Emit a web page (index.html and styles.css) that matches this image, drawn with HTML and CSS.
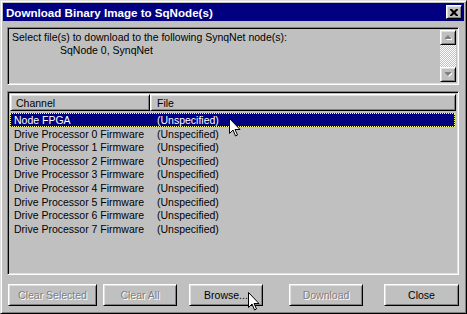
FILE: index.html
```html
<!DOCTYPE html>
<html lang="en">
  <head>
    <meta charset="UTF-8" />
    <title>Download Binary Image to SqNode(s)</title>
    <link rel="stylesheet" href="styles.css">
  </head>
  <body>
    <div class="window">
      <div class="titlebar">
        <span class="title">Download Binary Image to SqNode(s)</span>
        <div class="close-x">
          <svg width="8" height="7" viewBox="0 0 8 7">
            <path d="M0 0h2l2 2 2-2h2v1l-2.5 2.5 2.5 2.5v1h-2l-2-2-2 2h-2v-1l2.5-2.5-2.5-2.5z" fill="#000"/>
          </svg>
        </div>
      </div>

      <div class="content">
        <!-- 提示框 -->
        <div class="edit sunken">
          <div class="edit-text">
            <p>Select file(s) to download to the following SynqNet node(s):</p>
            <p class="indent">SqNode 0, SynqNet</p>
          </div>
          <div class="vscroll">
            <div class="sbtn raised">
              <svg width="7" height="5" viewBox="0 0 7 5"><path d="M4 1l3 3v1h-6z" fill="#fff"/><path d="M3 0l3 3v1h-6v-1z" fill="#808080"/></svg>
            </div>
            <div class="track"></div>
            <div class="sbtn raised">
              <svg width="7" height="5" viewBox="0 0 7 5"><path d="M1 1h6v1l-3 3z" fill="#fff"/><path d="M0 0h6v1l-3 3-3-3z" fill="#808080"/></svg>
            </div>
          </div>
        </div>

        <!-- 列表 -->
        <div class="list sunken">
          <div class="head">
            <div class="hcell raised col1">Channel</div>
            <div class="hcell raised col2">File</div>
          </div>
          <div class="rows">
            <div class="row selected"><span class="col1">Node FPGA</span><span class="col2">(Unspecified)</span></div>
            <div class="row"><span class="col1">Drive Processor 0 Firmware</span><span class="col2">(Unspecified)</span></div>
            <div class="row"><span class="col1">Drive Processor 1 Firmware</span><span class="col2">(Unspecified)</span></div>
            <div class="row"><span class="col1">Drive Processor 2 Firmware</span><span class="col2">(Unspecified)</span></div>
            <div class="row"><span class="col1">Drive Processor 3 Firmware</span><span class="col2">(Unspecified)</span></div>
            <div class="row"><span class="col1">Drive Processor 4 Firmware</span><span class="col2">(Unspecified)</span></div>
            <div class="row"><span class="col1">Drive Processor 5 Firmware</span><span class="col2">(Unspecified)</span></div>
            <div class="row"><span class="col1">Drive Processor 6 Firmware</span><span class="col2">(Unspecified)</span></div>
            <div class="row"><span class="col1">Drive Processor 7 Firmware</span><span class="col2">(Unspecified)</span></div>
          </div>
        </div>

        <!-- 按钮 -->
        <div class="buttons">
          <button class="btn raised disabled b-clear-sel">Clear Selected</button>
          <button class="btn raised disabled b-clear-all">Clear All</button>
          <button class="btn raised b-browse">Browse...</button>
          <button class="btn raised disabled b-download">Download</button>
          <button class="btn raised b-close">Close</button>
        </div>
      </div>

      <!-- 鼠标指针 -->
      <svg class="cursor cursor-1" width="12" height="19" viewBox="0 0 12 19">
        <path d="M0.5 0.5v15l3.5-3.5 2.5 6 2-1-2.5-5.5h5z" fill="#fff" stroke="#000" stroke-width="1"/>
      </svg>
      <svg class="cursor cursor-2" width="12" height="19" viewBox="0 0 12 19">
        <path d="M0.5 0.5v15l3.5-3.5 2.5 6 2-1-2.5-5.5h5z" fill="#fff" stroke="#000" stroke-width="1"/>
      </svg>
    </div>
  </body>
</html>
```

FILE: styles.css
```css
* {
  margin: 0;
  padding: 0;
  box-sizing: border-box;
}

body {
  background-color: #c0c0c0;
  font-family: "Liberation Sans", Arial, sans-serif;
  font-size: 10.5px;
  color: #000;
}

.window {
  position: relative;
  width: 467px;
  height: 314px;
  padding: 2px;
  border: 1px solid;
  border-color: #dfdfdf #000 #000 #dfdfdf;
  box-shadow: inset 1px 1px #fff, inset -1px -1px #808080;
  background-color: #c0c0c0;
  display: flex;
  flex-direction: column;
}

.raised {
  border: 1px solid;
  border-color: #fff #000 #000 #fff;
  box-shadow: inset 1px 1px #dfdfdf, inset -1px -1px #808080;
  background-color: #c0c0c0;
}

.sunken {
  border: 1px solid;
  border-color: #808080 #fff #fff #808080;
  box-shadow: inset 1px 1px #000, inset -1px -1px #dfdfdf;
  background-color: #c0c0c0;
}

.titlebar {
  height: 18px;
  background-color: #000080;
  display: flex;
  align-items: center;
  justify-content: space-between;
  padding: 0 2px 0 3px;
}

.title {
  color: #fff;
  font-weight: bold;
  font-size: 11.6px;
}

.close-x {
  width: 16px;
  height: 14px;
  border: 1px solid;
  border-color: #fff #000 #000 #fff;
  box-shadow: inset 1px 1px #dfdfdf, inset -1px -1px #808080;
  background-color: #c0c0c0;
  display: flex;
  align-items: center;
  justify-content: center;
}

.content {
  flex: 1;
  display: flex;
  flex-direction: column;
  padding: 6px 5px 0 4px;
}

.edit {
  height: 58px;
  display: flex;
  padding: 2px;
}

.edit-text {
  flex: 1;
  padding: 1px 0 0 2px;
  line-height: 13px;
}

.edit-text .indent {
  padding-left: 48px;
}

.vscroll {
  width: 16px;
  display: flex;
  flex-direction: column;
}

.sbtn {
  height: 15px;
  display: flex;
  align-items: center;
  justify-content: center;
}

.track {
  flex: 1;
  background-image: repeating-conic-gradient(#fff 0 25%, #c0c0c0 0 50%);
  background-size: 2px 2px;
}

.list {
  height: 184px;
  margin-top: 6px;
  padding: 2px;
}

.head {
  display: flex;
  height: 17px;
}

.hcell {
  display: flex;
  align-items: center;
  padding-left: 5px;
}

.head .col1 {
  width: 140px;
}

.head .col2 {
  flex: 1;
  padding-left: 6px;
}

.rows {
  padding-top: 2px;
}

.row {
  display: flex;
  height: 13.6px;
  line-height: 12px;
  border: 1px solid transparent;
  margin-right: 1px;
}

.row .col1 {
  width: 146px;
  padding-left: 3px;
}

.row.selected {
  background-color: #000080;
  color: #fff;
  border: 1px dotted #ffff80;
}

.buttons {
  display: flex;
  margin-top: 9px;
}

.btn {
  height: 22px;
  font-family: "Liberation Sans", Arial, sans-serif;
  font-size: 10.5px;
  color: #000;
}

.btn.disabled {
  color: #808080;
  text-shadow: 1px 1px #fff;
}

.b-clear-sel {
  width: 89px;
  margin-left: 1px;
}

.b-clear-all {
  width: 74px;
  margin-left: 6px;
}

.b-browse {
  width: 74px;
  margin-left: 12px;
}

.b-download {
  width: 74px;
  margin-left: 26px;
}

.b-close {
  width: 75px;
  margin-left: 21px;
}

.cursor {
  position: absolute;
}

.cursor-1 {
  left: 228px;
  top: 117px;
}

.cursor-2 {
  left: 247px;
  top: 291px;
}
```
